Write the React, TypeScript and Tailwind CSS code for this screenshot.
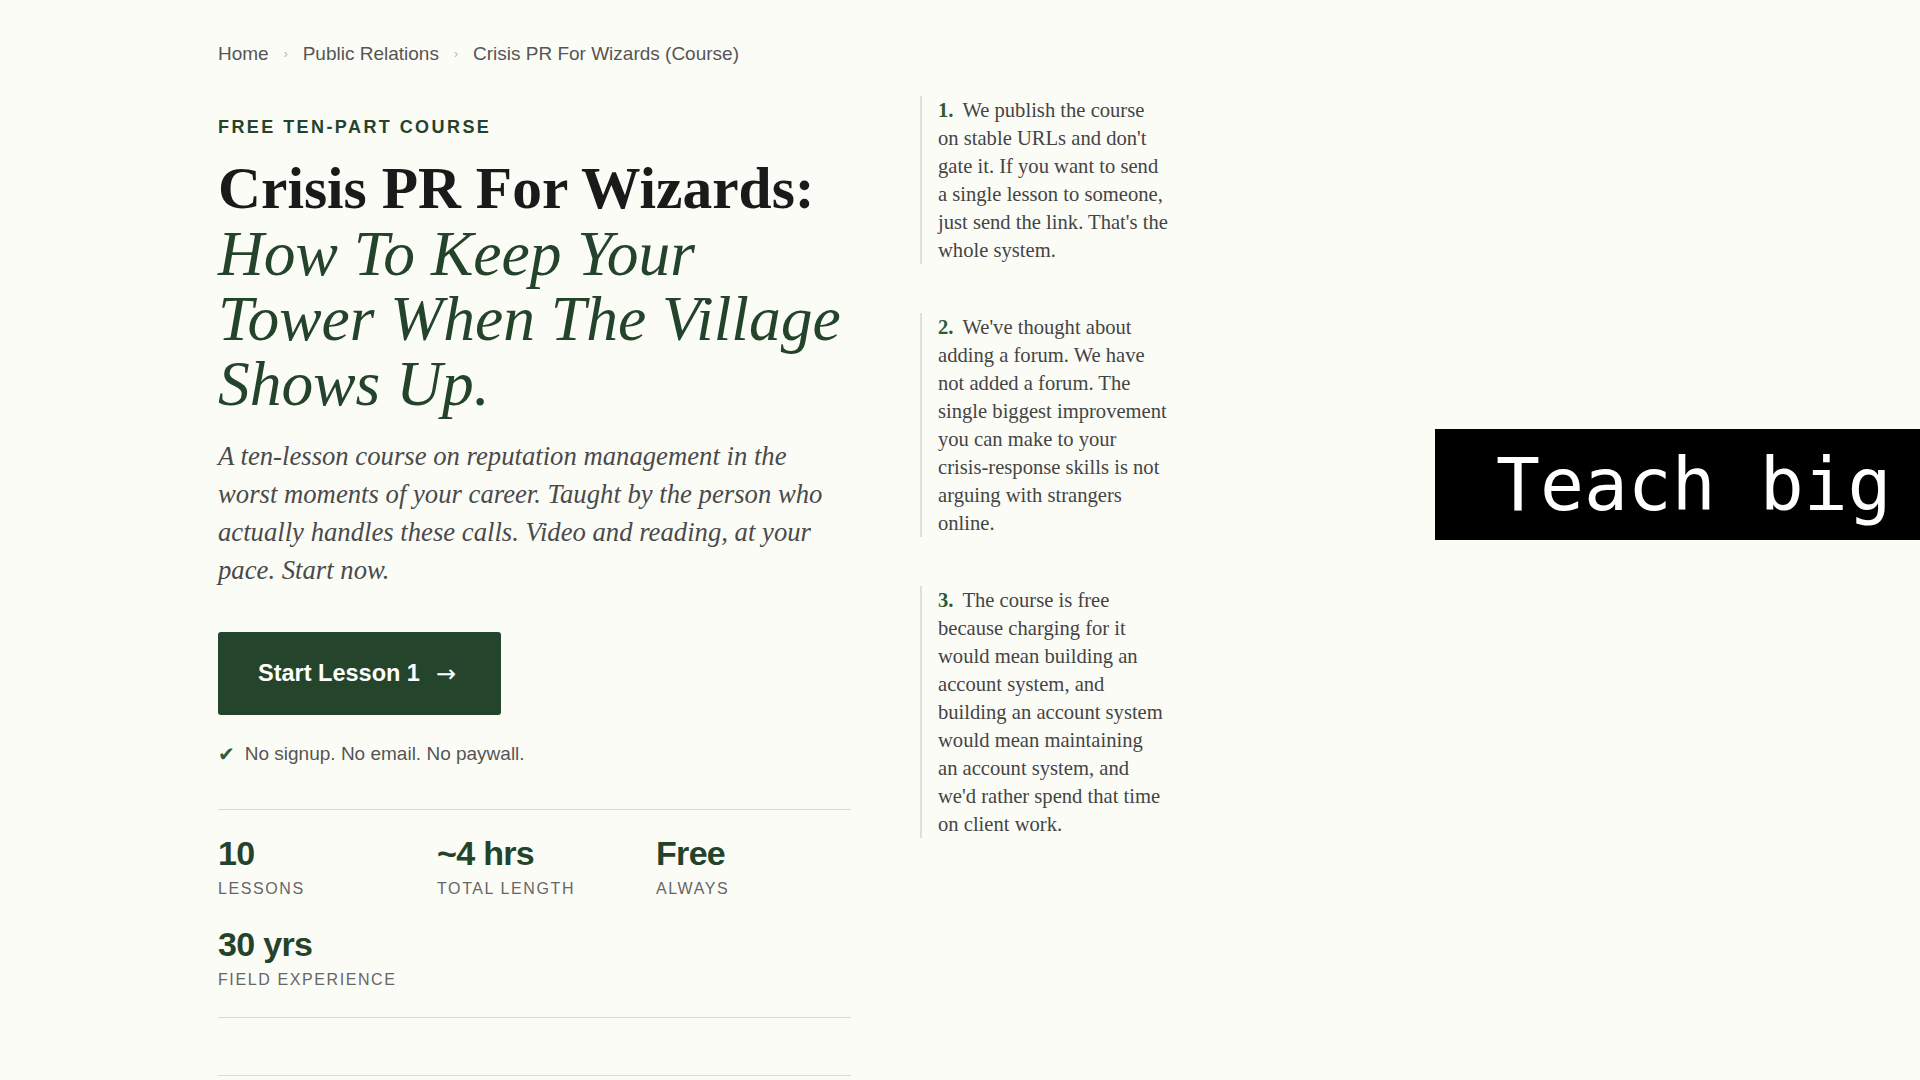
import { FC } from 'react';

const sans = 'font-["Liberation_Sans",Arial,sans-serif]';
const serif = 'font-["Liberation_Serif","Times_New_Roman",serif]';

const crumbs = ['Home', 'Public Relations', 'Crisis PR For Wizards (Course)'];

const stats = [
  { value: '10', label: 'Lessons' },
  { value: '~4 hrs', label: 'Total length' },
  { value: 'Free', label: 'Always' },
  { value: '30 yrs', label: 'Field experience' },
];

// lines are kept as the page set them, the serif here runs narrower
const intro = [
  'A ten-lesson course on reputation management in the',
  'worst moments of your career. Taught by the person who',
  'actually handles these calls. Video and reading, at your',
  'pace. Start now.',
];

const notes = [
  [
    'We publish the course',
    "on stable URLs and don't",
    'gate it. If you want to send',
    'a single lesson to someone,',
    "just send the link. That's the",
    'whole system.',
  ],
  [
    "We've thought about",
    'adding a forum. We have',
    'not added a forum. The',
    'single biggest improvement',
    'you can make to your',
    'crisis-response skills is not',
    'arguing with strangers',
    'online.',
  ],
  [
    'The course is free',
    'because charging for it',
    'would mean building an',
    'account system, and',
    'building an account system',
    'would mean maintaining',
    'an account system, and',
    "we'd rather spend that time",
    'on client work.',
  ],
];

const Breadcrumb: FC = () => (
  <nav className={`flex items-center text-[19px] leading-[28px] text-[#555] ${sans}`}>
    {crumbs.map((c, i) => (
      <span key={c} className="flex items-center">
        {i > 0 && <span className="mx-[15px] text-[12px] text-[#b5b5b0]">›</span>}
        <a>{c}</a>
      </span>
    ))}
  </nav>
);

const Hero: FC = () => (
  <div className="w-[633px] shrink-0 pt-[17px]">
    <p className={`text-[18px] leading-6 font-bold uppercase tracking-[0.135em] text-[#23432a] ${sans}`}>
      Free ten-part course
    </p>

    <h1 className={`mt-[17px] text-[59.5px] leading-[65px] font-bold text-[#1a1a1a] ${serif}`}>
      Crisis PR For Wizards:
      <span className="block text-[63.5px] font-normal italic text-[#23432a]">
        How To Keep Your Tower When The Village Shows Up.
      </span>
    </h1>

    <p className={`mt-[21px] text-[26.7px] leading-[38px] italic text-[#4a4a4a] ${serif}`}>
      {intro.map((l, i) => (
        <span key={i} className="block">
          {l}
        </span>
      ))}
    </p>

    <button
      className={`mt-[43px] flex h-[83px] w-[283px] items-center gap-[16px] rounded-[3px] bg-[#24452b] pl-[40px] text-[23.5px] font-bold text-white ${sans}`}
    >
      Start Lesson 1
      <span className='font-["DejaVu_Sans",sans-serif] text-[24px] leading-none font-normal'>→</span>
    </button>

    <p className={`mt-[25px] flex items-center gap-[10px] text-[19px] leading-[28px] text-[#555] ${sans}`}>
      <span className='font-["DejaVu_Sans",sans-serif] text-[20px] text-[#2e5e33]'>✔</span>
      No signup. No email. No paywall.
    </p>

    <div className="mt-[41px] grid grid-cols-3 gap-x-6 gap-y-[23px] border-y border-[#dcdcd6] pt-[23px] pb-[25px]">
      {stats.map((s) => (
        <div key={s.label} className={sans}>
          <div className="text-[34px] leading-[40px] font-bold tracking-[-0.02em] text-[#23432a]">{s.value}</div>
          <div className="mt-[4px] text-[16px] leading-6 uppercase tracking-[0.1em] text-[#666]">{s.label}</div>
        </div>
      ))}
    </div>
    <div className="h-[58px] border-b border-[#dcdcd6]" />
  </div>
);

const Notes: FC = () => (
  <aside className="ml-[69px] -mt-[2px] flex w-[270px] flex-col gap-[49px]">
    {notes.map((lines, i) => (
      <p
        key={i}
        className={`border-l-2 border-[#e0e0da] pl-[16px] text-[20.6px] leading-[28px] text-[#444] ${serif}`}
      >
        {lines.map((l, j) => (
          <span key={j} className="block whitespace-nowrap">
            {j === 0 && <span className="mr-[9px] font-bold text-[#2f5a33]">{i + 1}.</span>}
            {l}
          </span>
        ))}
      </p>
    ))}
  </aside>
);

const App: FC = () => {
  return (
    <div className="relative h-screen w-full overflow-hidden bg-[#fcfcf7]">
      <div className="pl-[218px] pt-[40px]">
        <Breadcrumb />
        <div className="mt-[30px] flex items-start">
          <Hero />
          <Notes />
        </div>
      </div>

      {/* caption overlay */}
      <div className="absolute left-[1435px] right-0 top-[429px] flex h-[111px] items-center bg-black pl-[61px]">
        <span className='whitespace-nowrap font-["DejaVu_Sans_Mono",monospace] text-[73px] leading-none text-white'>
          Teach big
        </span>
      </div>
    </div>
  );
};

export default App;
